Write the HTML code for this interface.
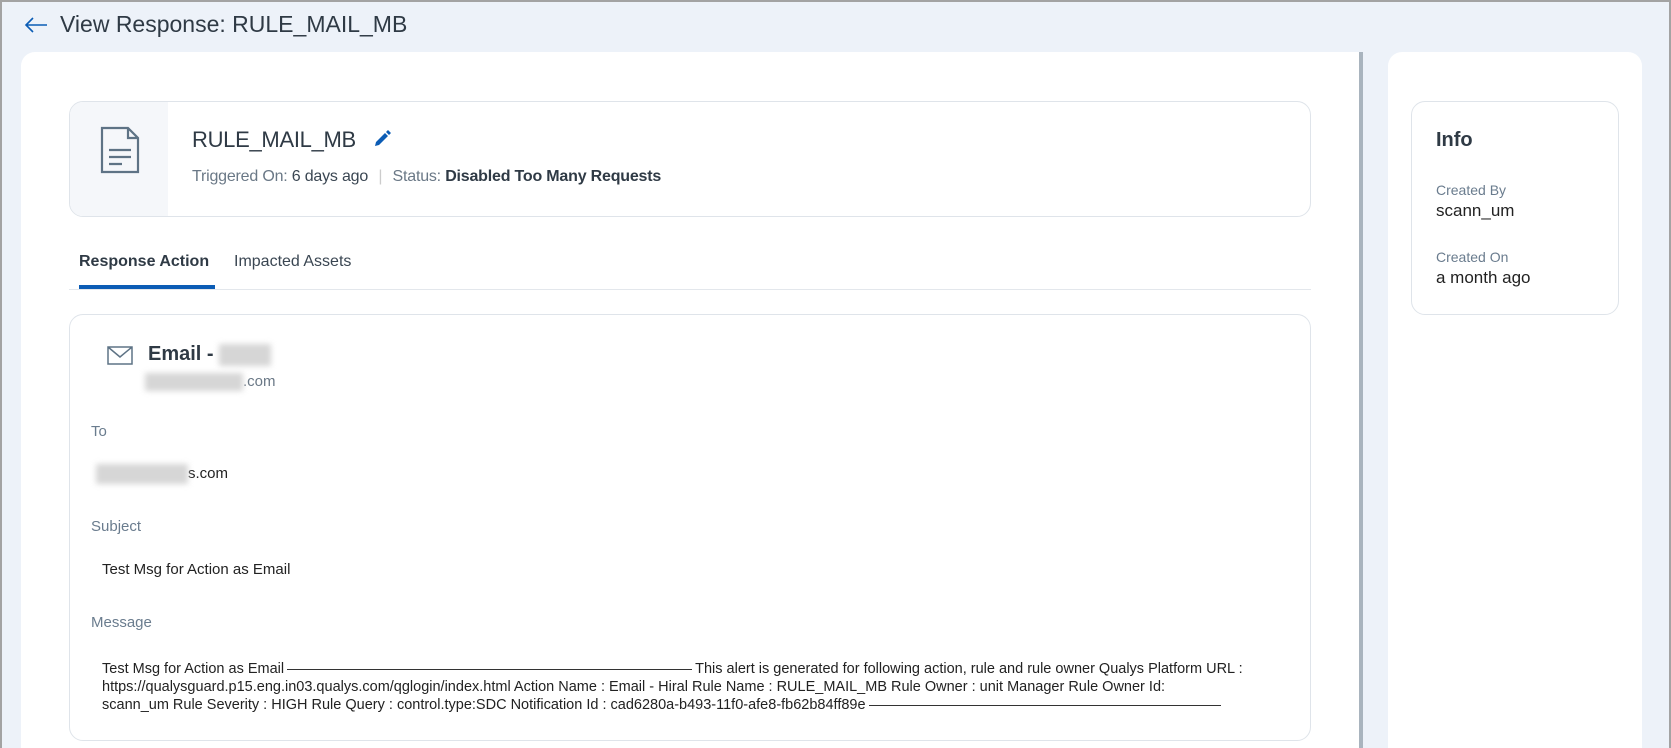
<!DOCTYPE html>
<html><head><meta charset="utf-8"><style>
*{box-sizing:border-box;margin:0;padding:0}
html{width:1671px;height:748px;overflow:hidden}
body{width:1671px;height:748px;overflow:hidden;background:#edf2f9;font-family:"Liberation Sans",Arial,sans-serif;color:#2f3a45;position:relative}
.frame{position:absolute;left:0;top:0;width:1671px;height:748px;border:2px solid #a3a3a3;border-bottom:none}
.abs{position:absolute;white-space:nowrap}
.card{position:absolute;background:#fff;border-radius:14px}
.box{position:absolute;border:1px solid #dfe4ea;border-radius:14px;background:#fff}
.lbl{color:#6a7c8e;font-size:15px}
.blur{display:inline-block;background:#d6d6d6;filter:blur(3px);vertical-align:middle}
.dash{display:inline-block;border-bottom:1px solid #333;vertical-align:middle;margin:0 3px}
</style></head><body>
<div class="card" style="left:21px;top:52px;width:1340px;height:696px;border-radius:14px 0 0 0"></div>
<div class="abs" style="left:1359px;top:52px;width:4px;height:696px;background:#a9b4be"></div>
<div class="card" style="left:1388px;top:52px;width:254px;height:696px;border-radius:14px 14px 0 0"></div>
<div class="frame"></div>
<svg class="abs" style="left:23px;top:15px" width="26" height="20" viewBox="0 0 26 20"><path d="M24 10H3M10 3L3 10l7 7" fill="none" stroke="#0b5cb5" stroke-width="1.6"/></svg>
<div class="abs" style="left:60px;top:11px;font-size:23px;color:#2f3a45">View Response: RULE_MAIL_MB</div>

<div class="box" style="left:1411px;top:101px;width:208px;height:214px"></div>
<div class="abs" style="left:1436px;top:129px;font-size:20px;font-weight:bold;color:#2f3a45">Info</div>
<div class="abs lbl" style="left:1436px;top:182px;font-size:14px">Created By</div>
<div class="abs" style="left:1436px;top:201px;font-size:17px;color:#222">scann_um</div>
<div class="abs lbl" style="left:1436px;top:249px;font-size:14px">Created On</div>
<div class="abs" style="left:1436px;top:268px;font-size:17px;color:#222">a month ago</div>

<div class="box" style="left:69px;top:101px;width:1242px;height:116px;overflow:hidden">
  <div style="position:absolute;left:0;top:0;width:98px;height:116px;background:#f5f7fa"></div>
</div>
<svg class="abs" style="left:100px;top:126px" width="40" height="50" viewBox="0 0 40 50"><path d="M2 2h26l10 10v34H2z M28 2v10h10 M9 24h22 M9 31h22 M9 38h13" fill="none" stroke="#5e7385" stroke-width="2.2"/></svg>
<div class="abs" style="left:192px;top:127px;font-size:22px;color:#2f3a45;letter-spacing:-0.3px">RULE_MAIL_MB</div>
<svg class="abs" style="left:372px;top:129px" width="20" height="20" viewBox="0 0 20 20"><path d="M3 17l1-4 9-9 3 3-9 9z M14 3l2-2 3 3-2 2z" fill="#0b5cb5"/></svg>
<div class="abs" style="left:192px;top:168px;font-size:16px;color:#6a7886;letter-spacing:-0.2px">Triggered On: <span style="color:#3a4652">6 days ago</span> <span style="color:#ccc;margin:0 6px">|</span> Status: <b style="color:#2f3a45">Disabled Too Many Requests</b></div>

<div class="abs" style="left:79px;top:253px;font-size:16px;font-weight:bold;color:#2f3a45">Response Action</div>
<div class="abs" style="left:234px;top:253px;font-size:16px;color:#3a4652">Impacted Assets</div>
<div class="abs" style="left:69px;top:289px;width:1242px;height:1px;background:#e3e7ec"></div>
<div class="abs" style="left:79px;top:285px;width:136px;height:4px;background:#0b5cb5"></div>

<div class="box" style="left:69px;top:314px;width:1242px;height:427px"></div>
<svg class="abs" style="left:107px;top:346px" width="26" height="19" viewBox="0 0 26 19"><path d="M1 1h24v17H1z M1 1l12 10L25 1" fill="none" stroke="#5e7385" stroke-width="1.5"/></svg>
<div class="abs" style="left:148px;top:343px;font-size:20px;font-weight:bold;color:#2f3a45">Email - <span class="blur" style="width:52px;height:22px"></span></div>
<div class="abs" style="left:145px;top:373px;font-size:15px;color:#6a7886"><span class="blur" style="width:98px;height:18px"></span>.com</div>
<div class="abs lbl" style="left:91px;top:423px">To</div>
<div class="abs" style="left:96px;top:464px;font-size:15px;color:#222"><span class="blur" style="width:92px;height:20px"></span>s.com</div>
<div class="abs lbl" style="left:91px;top:518px">Subject</div>
<div class="abs" style="left:102px;top:561px;font-size:15px;color:#222">Test Msg for Action as Email</div>
<div class="abs lbl" style="left:91px;top:614px">Message</div>
<div class="abs" style="left:102px;top:660px;font-size:14.5px;line-height:18px;color:#222">Test Msg for Action as Email<span class="dash" style="width:405px"></span>This alert is generated for following action, rule and rule owner Qualys Platform URL :<br>https://qualysguard.p15.eng.in03.qualys.com/qglogin/index.html Action Name : Email - Hiral Rule Name : RULE_MAIL_MB Rule Owner : unit Manager Rule Owner Id:<br>scann_um Rule Severity : HIGH Rule Query : control.type:SDC Notification Id : cad6280a-b493-11f0-afe8-fb62b84ff89e<span class="dash" style="width:352px"></span></div>
</body></html>
